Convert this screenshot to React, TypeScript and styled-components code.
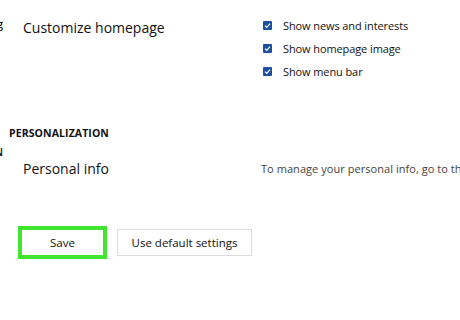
import React from "react";
import styled, { createGlobalStyle } from "styled-components";

const GlobalStyle = createGlobalStyle`
  html, body {
    margin: 0;
    padding: 0;
    background: #ffffff;
  }
  body {
    font-family: "Open Sans", "Noto Sans", sans-serif;
    color: #111111;
  }
`;

const Page = styled.div`
  width: 460px;
  height: 320px;
  display: flex;
  overflow: hidden;
`;

const Sidebar = styled.div`
  width: 3px;
  flex-shrink: 0;
  overflow: hidden;
  display: flex;
  flex-direction: column;
  align-items: flex-end;
`;

const SideItem = styled.div<{ $top: number }>`
  margin-top: ${(p) => p.$top}px;
  font-size: 11px;
  font-weight: 600;
  white-space: nowrap;
  line-height: 12px;
  direction: rtl;
`;

const Main = styled.div`
  flex: 1;
  display: flex;
  flex-direction: column;
  padding-left: 6px;
`;

const SettingRow = styled.div<{ $top: number }>`
  display: grid;
  grid-template-columns: 238px 1fr;
  padding-left: 14px;
  margin-top: ${(p) => p.$top}px;
`;

const SettingLabel = styled.div`
  font-size: 14px;
  line-height: 20px;
  color: #111;
`;

const Options = styled.div`
  display: flex;
  flex-direction: column;
  gap: 8px;
  margin-left: 2px;
`;

const Option = styled.label`
  display: flex;
  align-items: center;
  gap: 11px;
  font-size: 11px;
  line-height: 15px;
  letter-spacing: -0.1px;
  color: #111;
`;

const Box = styled.span`
  width: 9px;
  height: 9px;
  background: #1c4f9f;
  border-radius: 1px;
  display: flex;
  align-items: center;
  justify-content: center;
`;

const Description = styled.div`
  font-size: 11px;
  line-height: 15px;
  color: #444;
  white-space: nowrap;
  padding-top: 2px;
  letter-spacing: 0.05px;
`;

const SectionTitle = styled.div`
  margin-top: 47px;
  font-size: 10.5px;
  font-weight: 700;
  letter-spacing: 0.1px;
  color: #111;
`;

const Buttons = styled.div`
  display: flex;
  align-items: center;
  gap: 10px;
  margin-top: 47px;
  padding-left: 9px;
`;

const Button = styled.button<{ $highlight?: boolean }>`
  font-family: "Open Sans", "Noto Sans", sans-serif;
  font-size: 11.5px;
  color: #111;
  background: #fff;
  border: ${(p) => (p.$highlight ? "4px solid #3fe52e" : "1px solid #dcdcdc")};
  height: ${(p) => (p.$highlight ? 33 : 27)}px;
  width: ${(p) => (p.$highlight ? 89 : 135)}px;
  padding: 0;
  border-radius: 0;
`;

function Check() {
  return (
    <Box>
      <svg width="7" height="7" viewBox="0 0 7 7">
        <path d="M1 3.6 L2.8 5.3 L6 1.6" stroke="#fff" strokeWidth="1.2" fill="none" />
      </svg>
    </Box>
  );
}

export default function App() {
  const options = ["Show news and interests", "Show homepage image", "Show menu bar"];
  return (
    <>
      <GlobalStyle />
      <Page>
        <Sidebar>
          <SideItem $top={18}>g</SideItem>
          <SideItem $top={116}>N</SideItem>
        </Sidebar>
        <Main>
          <SettingRow $top={18}>
            <SettingLabel>Customize homepage</SettingLabel>
            <Options>
              {options.map((o) => (
                <Option key={o}>
                  <Check />
                  {o}
                </Option>
              ))}
            </Options>
          </SettingRow>
          <SectionTitle>PERSONALIZATION</SectionTitle>
          <SettingRow $top={19}>
            <SettingLabel>Personal info</SettingLabel>
            <Description>To manage your personal info, go to the</Description>
          </SettingRow>
          <Buttons>
            <Button $highlight>Save</Button>
            <Button>Use default settings</Button>
          </Buttons>
        </Main>
      </Page>
    </>
  );
}
